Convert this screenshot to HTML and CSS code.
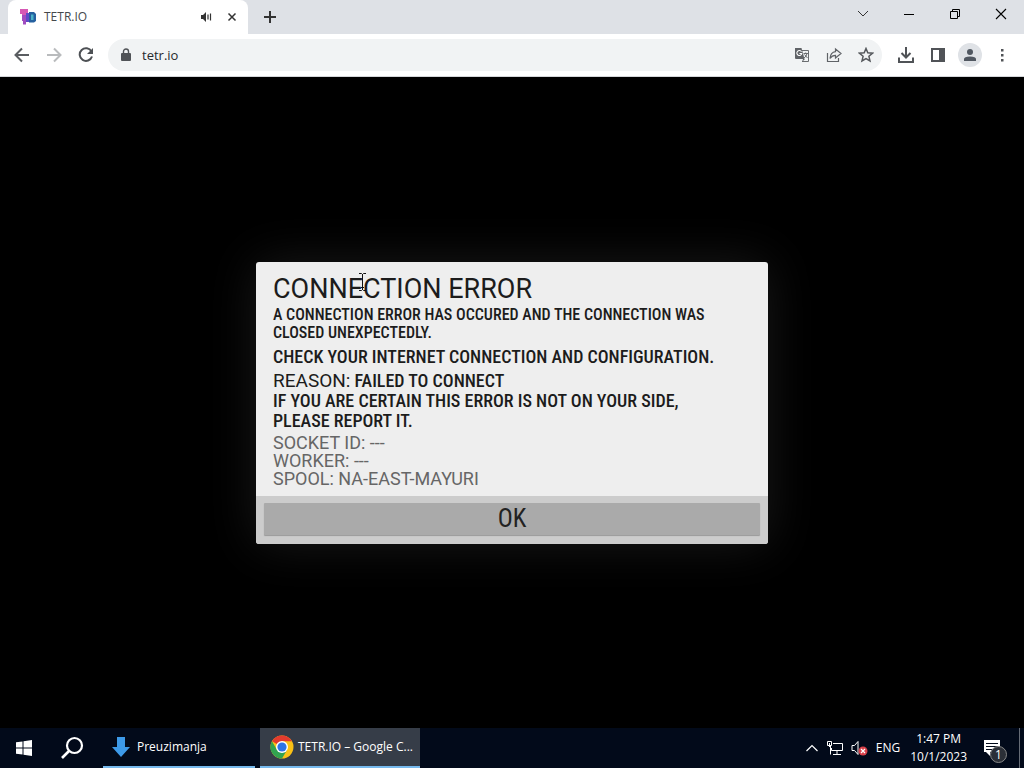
FILE: index.html
```
<!DOCTYPE html>
<html lang="en">
<head>
<meta charset="utf-8">
<title>TETR.IO</title>
<link rel="stylesheet" href="styles.css">
</head>
<body>
<header class="browser">
  <div class="tabstrip">
    <div class="tab">
      <svg class="favicon" width="16" height="16" viewBox="0 0 16 16"><path d="M0 0h8v4H6v5H2V5H0z" fill="#d658b4"/><path d="M2 6h4v9.500H3V12H2z" fill="#a04cc0"/><path d="M6 4h4v9H6z" fill="#5f49c8"/><path d="M9 3h5l2 2v7l-2 1.500H9z" fill="#25609f"/><path d="M11 5.500h2.500V11H11z" fill="#4cb3c8"/></svg>
      <span class="tab-title">TETR.IO</span>
      <button class="plain" aria-label="Mute tab"><svg width="12" height="12" viewBox="0 0 12 12"><path d="M1 4h2l3-3v10L3 8H1z" fill="#333"/><path d="M8 3.500v5M10.500 2.500v7" stroke="#333" stroke-width="1.200"/></svg></button>
      <button class="plain tab-close" aria-label="Close tab"><svg width="10" height="10" viewBox="0 0 10 10"><path d="M1.500 1.500l7 7M8.500 1.500l-7 7" stroke="#333" stroke-width="1.500"/></svg></button>
    </div>
    <button class="plain new-tab" aria-label="New tab"><svg width="14" height="14" viewBox="0 0 14 14"><path d="M7 1v12M1 7h12" stroke="#333" stroke-width="2"/></svg></button>
    <div class="window-controls">
      <button class="plain" aria-label="Search tabs"><svg width="12" height="12" viewBox="0 0 12 12"><path d="M1 3l5 5 5-5" fill="none" stroke="#333"/></svg></button>
      <button class="plain" aria-label="Minimize"><svg width="12" height="12" viewBox="0 0 12 12"><path d="M1 6.500h10" stroke="#000"/></svg></button>
      <button class="plain" aria-label="Restore"><svg width="12" height="12" viewBox="0 0 12 12"><path d="M1.500 3.500h7v7h-7zM3.500 3V1.500h7v7H9" fill="none" stroke="#000"/></svg></button>
      <button class="plain" aria-label="Close"><svg width="12" height="12" viewBox="0 0 12 12"><path d="M1 1l10 10M11 1L1 11" stroke="#000" stroke-width="1.100"/></svg></button>
    </div>
  </div>
  <div class="toolbar">
    <button class="plain" aria-label="Back"><svg width="16" height="16" viewBox="0 0 16 16"><path d="M15 8H2M8 1.500L1.500 8 8 14.500" fill="none" stroke="#5a5d61" stroke-width="2"/></svg></button>
    <button class="plain" aria-label="Forward"><svg width="16" height="16" viewBox="0 0 16 16"><path d="M1 8h13M8 1.500L14.500 8 8 14.500" fill="none" stroke="#b9bbbd" stroke-width="2"/></svg></button>
    <button class="plain" aria-label="Reload"><svg width="16" height="16" viewBox="0 0 16 16"><path d="M13.500 4.500A6.300 6.300 0 1 0 14 9.500" fill="none" stroke="#4d5054" stroke-width="2"/><path d="M15 1v6H9z" fill="#4d5054"/></svg></button>
    <div class="omnibox">
      <svg width="10" height="14" viewBox="0 0 10 14"><path d="M1 5h8q1 0 1 1v6q0 1-1 1H1q-1 0-1-1V6q0-1 1-1z" fill="#505357"/><path d="M2.500 5V3.500a2.500 2.500 0 0 1 5 0V5" fill="none" stroke="#505357" stroke-width="1.400"/></svg>
      <input class="address" type="text" value="tetr.io" aria-label="Address">
      <button class="plain" aria-label="Translate"><svg width="16" height="16" viewBox="0 0 16 16"><path d="M6 3.500h8.500v11H8" fill="none" stroke="#6a6d70"/><path d="M1 1h6.500l3 11H2q-1 0-1-1z" fill="#606367"/><path d="M7.500 4.700A2.500 2.500 0 1 0 7.800 6.500H5.500" fill="none" stroke="#fff" stroke-width="1.100"/><path d="M9 12h2l-3 3z" fill="#606367"/><path d="M9.500 6.500h4.500M11.700 5.500v1M13 6.500q-.5 3-3 4.500M10.500 7.500l3 3.500" fill="none" stroke="#6a6d70"/></svg></button>
      <button class="plain" aria-label="Share"><svg width="16" height="16" viewBox="0 0 16 16"><path d="M1.500 6v8.500h11V11" fill="none" stroke="#606367" stroke-width="1.200"/><path d="M9.500 2L15 6.500 9.500 11V8.300Q6 8.300 4 11.500 4.500 5.300 9.500 4.700z" fill="none" stroke="#606367" stroke-width="1.200"/></svg></button>
      <button class="plain" aria-label="Bookmark"><svg width="16" height="16" viewBox="0 0 16 16"><path d="M8 1.500l1.800 4.300 4.700.4-3.600 3.100 1.100 4.600L8 11.500l-4 2.400 1.100-4.600L1.500 6.200l4.700-.4z" fill="none" stroke="#55585c" stroke-width="1.500"/></svg></button>
    </div>
    <button class="plain" aria-label="Downloads"><svg width="16" height="16" viewBox="0 0 16 16"><path d="M8 0v10M3.500 6L8 10.500 12.500 6M1 10.500V15h14v-4.500" fill="none" stroke="#505357" stroke-width="2"/></svg></button>
    <button class="plain" aria-label="Side panel"><svg width="16" height="16" viewBox="0 0 16 16"><path d="M2 2h12v12H2z" fill="none" stroke="#505357" stroke-width="2"/><path d="M9 2h5v12H9z" fill="#505357"/></svg></button>
    <button class="plain profile" aria-label="Profile"><svg width="14" height="14" viewBox="0 0 14 14"><circle cx="7" cy="4" r="3" fill="#505760"/><path d="M1 13v-2q0-2.500 6-2.500t6 2.500v2z" fill="#505760"/></svg></button>
    <button class="plain" aria-label="Menu"><svg width="16" height="16" viewBox="0 0 16 16"><path d="M7 2h2.500v2.500H7zM7 7h2.500v2.500H7zM7 12h2.500v2.500H7z" fill="#505357"/></svg></button>
  </div>
</header>

<main class="page">
  <section class="dialog" role="alertdialog" aria-labelledby="dialog-title">
    <div class="dialog-body">
      <h1 class="dialog-title" id="dialog-title">CONNECTION ERROR</h1>
      <p class="lead">A CONNECTION ERROR HAS OCCURED AND THE CONNECTION WAS CLOSED UNEXPECTEDLY.</p>
      <p class="text spaced">CHECK YOUR INTERNET CONNECTION AND CONFIGURATION.</p>
      <p class="text"><span class="label">REASON:</span> FAILED TO CONNECT<br>IF YOU ARE CERTAIN THIS ERROR IS NOT ON YOUR SIDE,<br>PLEASE REPORT IT.</p>
      <p class="details">SOCKET ID: ---<br>WORKER: ---<br>SPOOL: NA-EAST-MAYURI</p>
    </div>
    <div class="dialog-footer"><button class="ok">OK</button></div>
    <svg class="cursor" width="9" height="18" viewBox="0 0 9 18"><path d="M1 .5h2.500l1 1 1-1H8M4.500 1v16M1 17.500h2.500l1-1 1 1H8M3 14.500h3" fill="none" stroke="#111"/></svg>
  </section>
</main>

<footer class="taskbar">
  <button class="plain start" aria-label="Start"><svg width="16" height="16" viewBox="0 0 16 16"><path d="M0 2.300L6.500 1.400V7.500H0zM7.500 1.200L16 0v7.500H7.500zM0 8.500h6.500v6.100L0 13.700zM7.500 8.500H16V16l-8.500-1.200z" fill="#fff"/></svg></button>
  <button class="plain search" aria-label="Search"><svg width="24" height="24" viewBox="0 0 24 24"><circle cx="14.500" cy="9.500" r="7.500" fill="none" stroke="#fff" stroke-width="2.200"/><path d="M9 15l-7 7" stroke="#fff" stroke-width="2.600"/></svg></button>
  <button class="task"><svg width="18" height="20" viewBox="0 0 18 20"><path d="M5 0h8v10h5l-9 10-9-10h5z" fill="#3d9ae8"/></svg><span>Preuzimanja</span></button>
  <button class="task active"><svg width="24" height="24" viewBox="0 0 24 24"><circle cx="12" cy="12" r="11.500" fill="#fbc116"/><path d="M12 12L2 6.200A11.500 11.500 0 0 1 22 6.200H12z" fill="#e33b2e"/><path d="M2 6.200A11.500 11.500 0 0 0 12 23.500L17 14.900 12 12 7 14.900z" fill="#31a350"/><circle cx="12" cy="12" r="6" fill="#fff"/><circle cx="12" cy="12" r="4.600" fill="#2e74e6"/></svg><span>TETR.IO – Google C...</span></button>
  <div class="tray">
    <svg width="14" height="16" viewBox="0 0 14 16"><path d="M1.500 11L7 5.500l5.500 5.500" fill="none" stroke="#fff" stroke-width="1.200"/></svg>
    <svg width="16" height="16" viewBox="0 0 16 16"><path d="M6 3.500h9.500v7H4.500V8M10 11v3M6 14.500h8M3.500 6v8.500" fill="none" stroke="#fff"/><path d="M.5 1.500h4v4h-4zM2.500 3v4" fill="none" stroke="#fff"/></svg>
    <svg width="17" height="16" viewBox="0 0 17 16"><path d="M1 5.500h2.500l3.500-4v13l-3.500-4H1z" fill="none" stroke="#fff"/><circle cx="12" cy="11" r="4.500" fill="#d9414a"/><path d="M10 9l4 4M14 9l-4 4" stroke="#fff" stroke-width="1.200"/></svg>
    <span>ENG</span>
    <div class="clock"><span>1:47 PM</span><span>10/1/2023</span></div>
    <button class="plain notices" aria-label="Notifications"><svg width="18" height="18" viewBox="0 0 18 18"><path d="M1 1h16v12H7v4l-4-4H1z" fill="#fff"/><path d="M3 4.500h12M3 7.500h12M3 10.500h8" stroke="#020a1a"/></svg><span class="badge">1</span></button>
  </div>
</footer>
</body>
</html>
```
FILE: styles.css
```
* { box-sizing: border-box; }
body {
  margin: 0;
  min-height: 100vh;
  display: flex;
  flex-direction: column;
  background: #000;
  font: 12px/16px "Open Sans", "Noto Sans", sans-serif;
}
svg { display: block; flex: none; }
.plain {
  display: flex;
  align-items: center;
  justify-content: center;
  padding: 0;
  border: 0;
  background: none;
}
.tabstrip {
  display: flex;
  height: 34px;
  background: #dee1e6;
}
.tab {
  display: flex;
  align-items: center;
  width: 240px;
  margin-left: 8px;
  padding: 0 10px 0 12px;
  border-radius: 8px 8px 0 0;
  background: #fff;
  color: #45484c;
}
.tab-title { flex: 1; margin-left: 8px; }
.tab-close { width: 12px; margin-left: 14px; }
.new-tab { width: 44px; }
.window-controls { display: flex; margin: 0 0 6px auto; }
.window-controls .plain { width: 46px; }
.toolbar {
  display: flex;
  align-items: center;
  height: 43px;
  padding: 0 6px;
  border-bottom: 1px solid #d5d7da;
  background: #fff;
}
.toolbar > .plain { width: 32px; height: 32px; }
.omnibox {
  display: flex;
  align-items: center;
  flex: 1;
  height: 32px;
  margin: 0 8px 0 6px;
  padding-left: 13px;
  border-radius: 16px;
  background: #f1f3f4;
}
.omnibox .plain { width: 32px; }
.address {
  flex: 1;
  min-width: 0;
  margin-left: 11px;
  padding: 0;
  border: 0;
  background: none;
  color: #26282c;
  font: 13px/20px "Open Sans", "Noto Sans", sans-serif;
}
.toolbar > .profile {
  width: 24px;
  height: 24px;
  margin: 0 4px;
  border-radius: 50%;
  background: #dfe2e6;
}
.page {
  display: flex;
  flex: 1;
  align-items: center;
  justify-content: center;
}
.dialog {
  position: relative;
  width: 50%;
  border-radius: 3px;
  background: #eee;
  color: #1c1c1c;
  box-shadow: 0 0 50px rgba(255, 255, 255, 0.1);
}
.dialog-body {
  padding: 10px 48px 8px 17px;
  font: 500 18px/20px "Roboto Condensed", "Liberation Sans Narrow", sans-serif;
}
.dialog-title {
  margin: 0;
  font: 27px/34px Roboto, sans-serif;
}
.lead, .text, .details { margin: 0; }
.lead { font-size: 16px; line-height: 18px; }
.spaced { margin: 5px 0 4px; }
.label { font: 19px/20px Roboto, sans-serif; }
.details {
  margin-top: 3px;
  color: #666;
  font: 18px/18px Roboto, sans-serif;
}
.dialog-footer {
  display: flex;
  padding: 7px 8px 9px;
  border-radius: 0 0 3px 3px;
  background: #ccc;
}
.ok {
  flex: 1;
  height: 32px;
  padding: 0;
  border: 0;
  border-radius: 1px;
  background: #aaa;
  box-shadow: 0 1px 1px #999;
  color: #222;
  font: 25px/32px "Roboto Condensed", Roboto, sans-serif;
}
.cursor {
  position: absolute;
  top: 11px;
  left: 102px;
}
.taskbar {
  display: flex;
  align-items: stretch;
  height: 40px;
  background: #020a1a;
  color: #fff;
}
.start { width: 48px; }
.search { width: 48px; margin-right: 7px; }
.task {
  display: flex;
  align-items: center;
  gap: 7px;
  width: 152px;
  padding: 0 9px;
  border: 0;
  border-bottom: 2px solid #76b9ed;
  background: none;
  color: #fff;
  font: inherit;
  white-space: nowrap;
}
.task.active {
  gap: 4px;
  width: 160px;
  margin-left: 5px;
  padding: 0 4px 0 10px;
  justify-content: flex-start;
  background: #363d48;
}
.tray {
  display: flex;
  align-items: center;
  gap: 8px;
  margin: 0 4px 0 auto;
  border-right: 1px solid #666c76;
}
.clock {
  display: flex;
  flex-direction: column;
  gap: 2px;
  margin-left: 2px;
  text-align: center;
}
.notices {
  position: relative;
  width: 24px;
  margin: 0 12px 0 8px;
  justify-content: flex-start;
}
.badge {
  position: absolute;
  top: 7px;
  left: 7px;
  width: 17px;
  height: 17px;
  border: 1px solid #888;
  border-radius: 50%;
  background: #2b2f37;
  color: #fff;
  font: 12px/15px "Open Sans", sans-serif;
}
```
